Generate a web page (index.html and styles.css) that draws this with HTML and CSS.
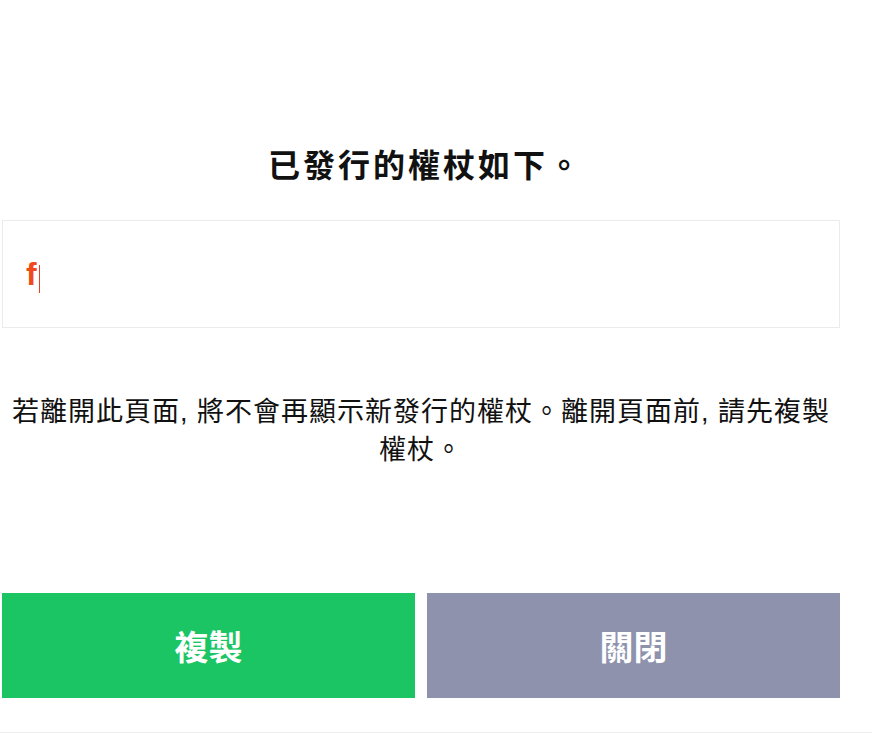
FILE: index.html
```html
<!DOCTYPE html>
<html lang="zh-Hant">
<head>
<meta charset="utf-8">
<title>權杖</title>
<link rel="stylesheet" href="styles.css">
</head>
<body>
<main class="page">
  <h1 class="title">已發行的權杖如下。</h1>
  <div class="token-box"><span class="token">f</span><span class="caret"></span></div>
  <p class="notice">若離開此頁面, 將不會再顯示新發行的權杖。離開頁面前, 請先複製權杖。</p>
  <div class="actions">
    <button class="btn btn-copy">複製</button>
    <button class="btn btn-close">關閉</button>
  </div>
</main>
<div class="footer-line"></div>
</body>
</html>
```
FILE: styles.css
```css
html, body {
  margin: 0;
  padding: 0;
  background: #ffffff;
}
body {
  font-family: "Liberation Sans", "Noto Sans CJK TC", sans-serif;
  color: #111111;
}
.page {
  width: 838px;
  margin-left: 2px;
  padding-top: 146px;
}
.title {
  margin: 0 0 34px;
  font-size: 32px;
  line-height: 40px;
  font-weight: bold;
  text-align: center;
  letter-spacing: 3px;
  text-indent: 9px;
  color: #111111;
}
.token-box {
  box-sizing: border-box;
  height: 108px;
  border: 1px solid #ebebeb;
  padding-left: 23px;
  display: flex;
  align-items: center;
}
.token {
  font-size: 32px;
  font-weight: bold;
  color: #f04a1c;
  line-height: 36px;
}
.caret {
  width: 1px;
  height: 28px;
  margin-left: 2px;
  margin-top: 10px;
  background: #e8401a;
}
.notice {
  margin: 65px 0 0;
  font-size: 27px;
  line-height: 38px;
  text-align: center;
  letter-spacing: 1px;
  color: #111111;
}
.actions {
  display: flex;
  gap: 12px;
  margin-top: 124px;
}
.btn {
  flex: 1;
  height: 105px;
  border: 0;
  margin: 0;
  padding: 0;
  font-family: inherit;
  font-size: 34px;
  font-weight: bold;
  color: #ffffff;
  cursor: pointer;
}
.btn-copy {
  background: #1bc563;
}
.btn-close {
  background: #8e92ad;
}
.footer-line {
  margin-top: 34px;
  border-top: 1px solid #eeeeee;
}
```
